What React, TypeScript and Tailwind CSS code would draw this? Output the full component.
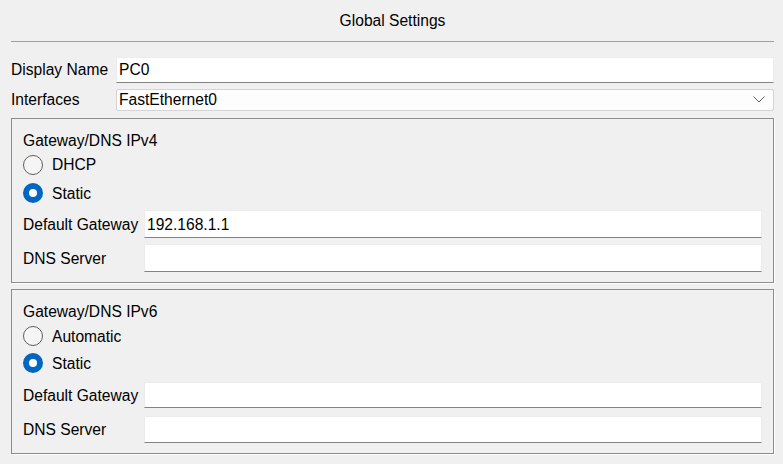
import React from "react";

const font = { fontFamily: '"Liberation Sans", Arial, sans-serif' };

function Radio({ checked, label, h }: { checked: boolean; label: string; h: string }) {
  return (
    <div className={`flex items-center ${h}`}>
      {checked ? (
        <span className="w-[20px] h-[20px] rounded-full bg-[#0067c0] flex items-center justify-center">
          <span className="w-[8px] h-[8px] rounded-full bg-white" />
        </span>
      ) : (
        <span className="w-[20px] h-[20px] rounded-full border border-[#5f5f5f] bg-[#f5f5f5]" />
      )}
      <span className="ml-[9px]">{label}</span>
    </div>
  );
}

function Field({ label, value, h, mt }: { label: string; value?: string; h: string; mt: string }) {
  return (
    <div className={`flex items-center ${mt}`}>
      <div className="w-[121px] shrink-0 whitespace-nowrap">{label}</div>
      <div
        className={`flex-1 ${h} bg-white border border-[#ececec] border-b-[#838383] flex items-center pl-[2px]`}
      >
        {value}
      </div>
    </div>
  );
}

export default function App() {
  return (
    <div
      className="w-[783px] h-[464px] bg-[#f0f0f0] pl-[11px] pr-[9px] text-[15.6px] text-black overflow-hidden"
      style={font}
    >
      <div className="h-[41px] flex items-center justify-center pt-[1px]">Global Settings</div>
      <div className="h-px bg-[#a0a0a0]" />

      <div className="flex items-center mt-[15px]">
        <div className="w-[105px] shrink-0 whitespace-nowrap">Display Name</div>
        <div className="flex-1 h-[26px] bg-white border border-[#ececec] border-b-[#838383] flex items-center pl-[2px]">
          PC0
        </div>
      </div>

      <div className="flex items-center mt-[5px]">
        <div className="w-[105px] shrink-0">Interfaces</div>
        <div className="flex-1 h-[22px] bg-[#fdfdfd] border border-[#d4d4d4] rounded-[2px] flex items-center justify-between pl-[2px] pr-[8px]">
          <span>FastEthernet0</span>
          <svg width="12" height="7" viewBox="0 0 12 7" fill="none">
            <path d="M0.5 0.5 L6 6 L11.5 0.5" stroke="#606060" strokeWidth="1" />
          </svg>
        </div>
      </div>

      <div className="mt-[7px] border border-[#8c8c8c] shadow-[1px_1px_0_#ffffff] pl-[11px] pr-[11px] pt-[10px] pb-[10px]">
        <div className="h-[22px] flex items-center">Gateway/DNS IPv4</div>
        <Radio checked={false} label="DHCP" h="h-[27px]" />
        <Radio checked={true} label="Static" h="h-[30px]" />
        <Field label="Default Gateway" value="192.168.1.1" h="h-[28px]" mt="mt-[2px]" />
        <Field label="DNS Server" h="h-[28px]" mt="mt-[6px]" />
      </div>

      <div className="mt-[6px] border border-[#8c8c8c] shadow-[1px_1px_0_#ffffff] pl-[11px] pr-[11px] pt-[10px] pb-[10px]">
        <div className="h-[22px] flex items-center">Gateway/DNS IPv6</div>
        <Radio checked={false} label="Automatic" h="h-[28px]" />
        <Radio checked={true} label="Static" h="h-[26px]" />
        <Field label="Default Gateway" h="h-[26px]" mt="mt-[6px]" />
        <Field label="DNS Server" h="h-[27px]" mt="mt-[8px]" />
      </div>
    </div>
  );
}
